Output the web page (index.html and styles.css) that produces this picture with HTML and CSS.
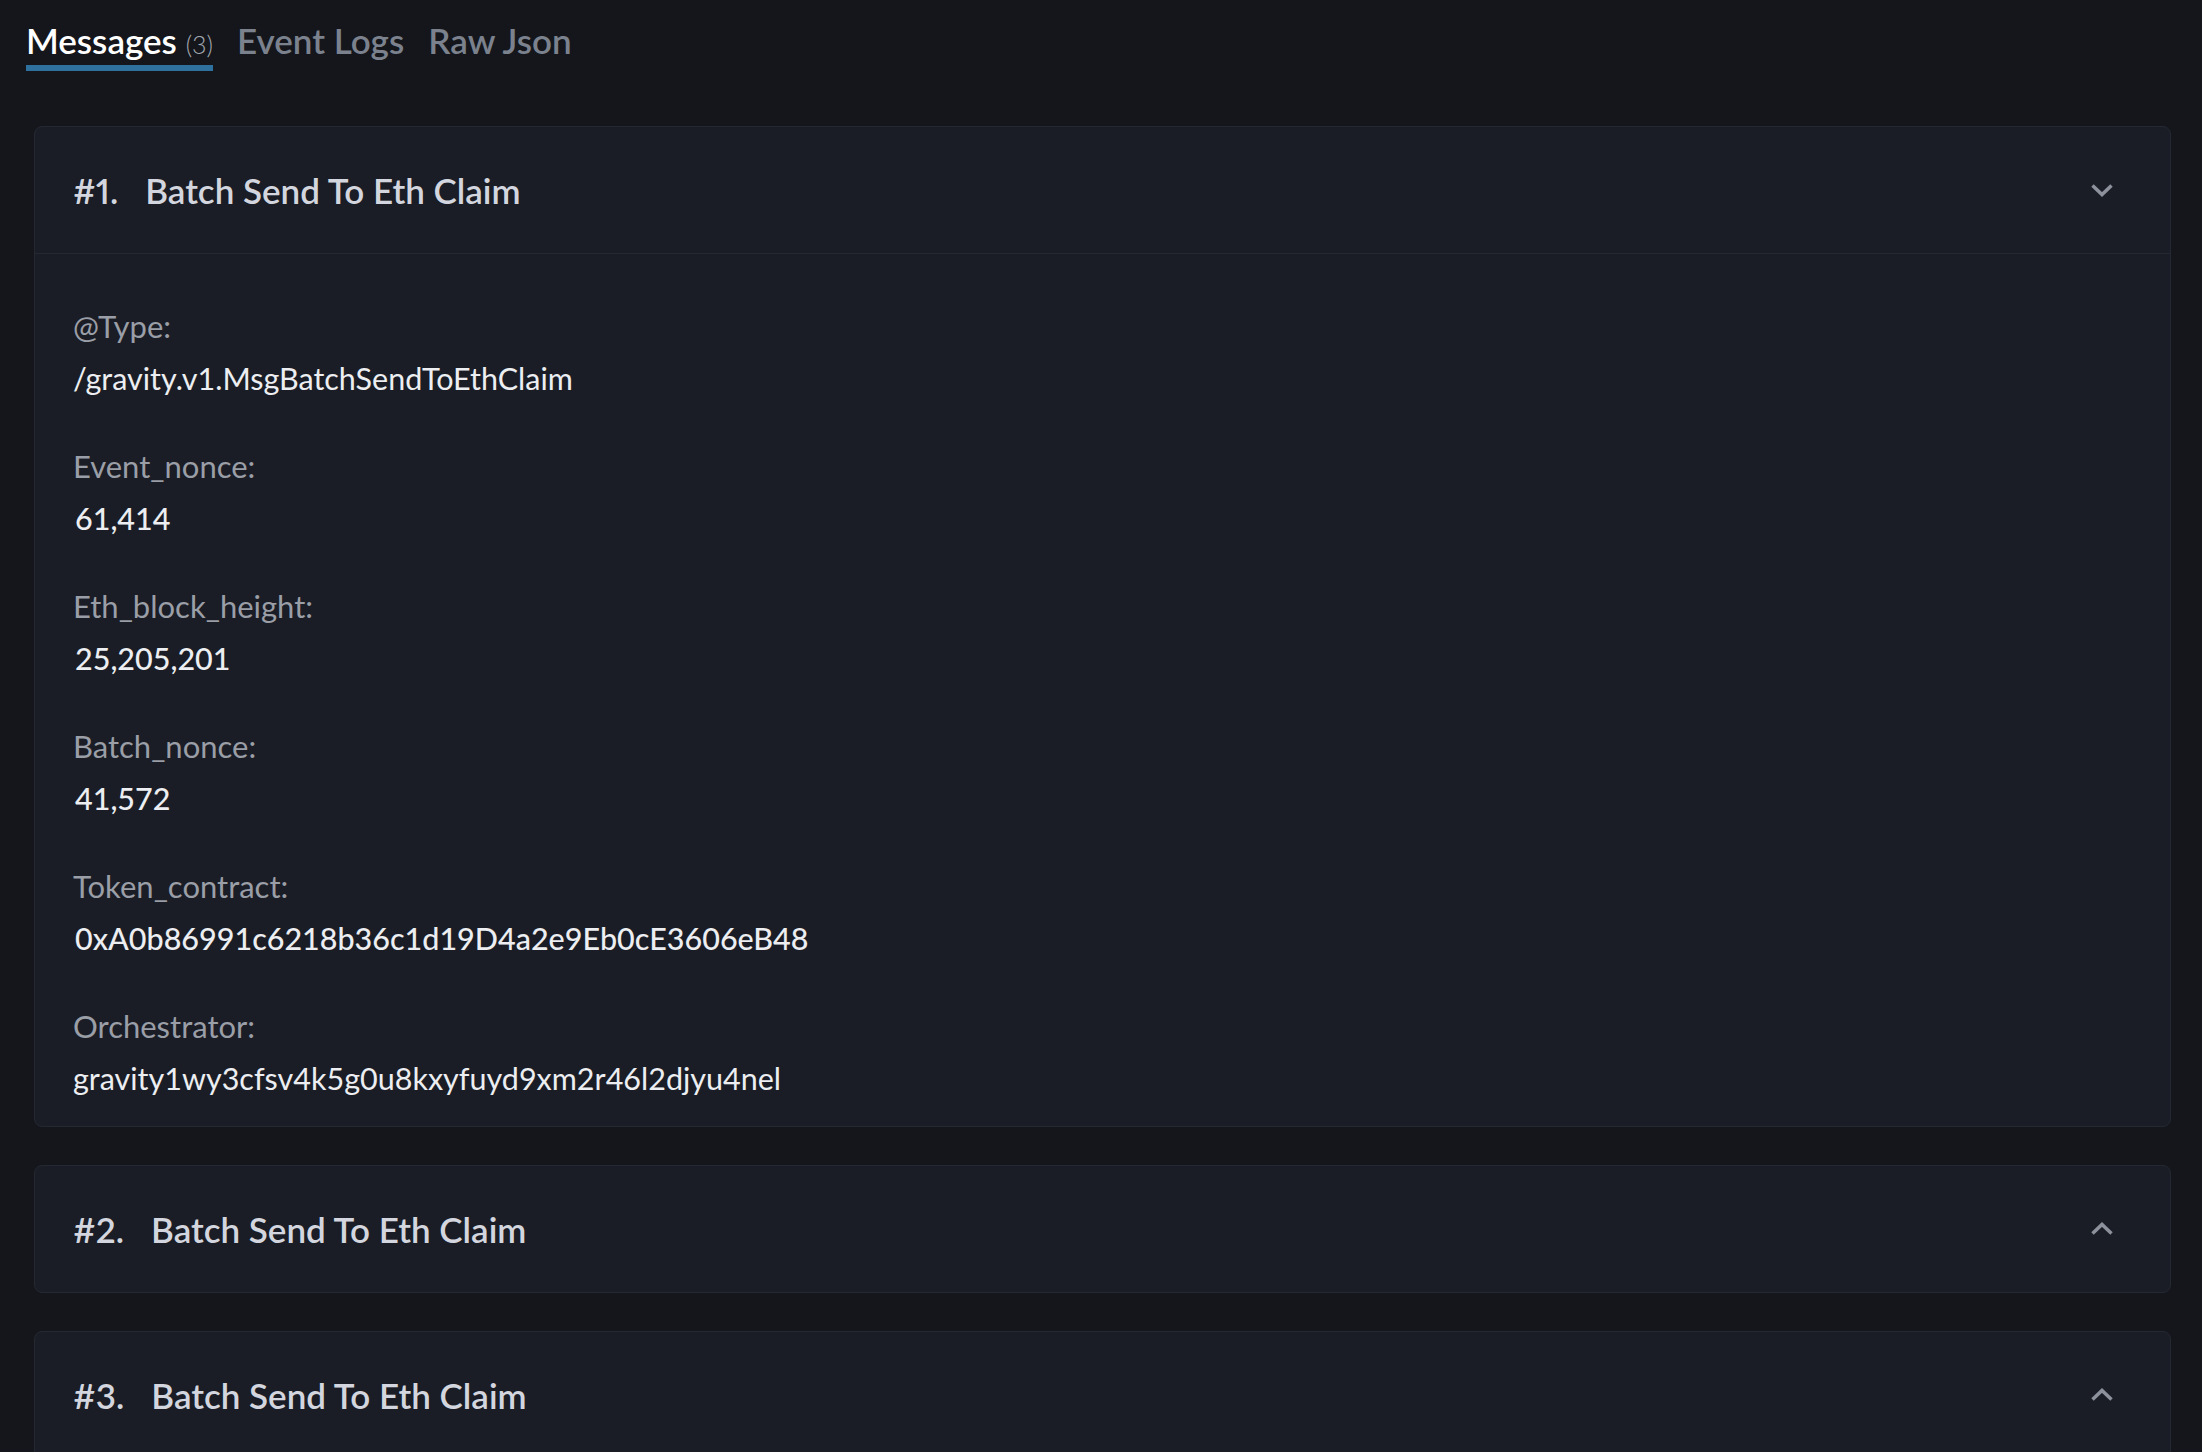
FILE: index.html
```html
<!DOCTYPE html>
<html lang="en">
<head>
    <meta charset="UTF-8">
    <meta name="viewport" content="width=device-width, initial-scale=1.0">
    <title>Transaction Messages</title>
    <link rel="stylesheet" href="styles.css">
</head>
<body>

    <div class="tabs">
        <div class="tab active">Messages <span class="count">(3)</span></div>
        <div class="tab">Event Logs</div>
        <div class="tab">Raw Json</div>
    </div>

    <div class="messages">
        <div class="msg">
            <div class="msg-head">
                <span class="msg-no">#1.</span>
                <span class="msg-title">Batch Send To Eth Claim</span>
                <svg class="chevron" viewBox="0 0 24 16" width="24" height="16"><polyline points="2.5,3.5 12,12.5 21.5,3.5"/></svg>
            </div>
            <div class="msg-body">
                <div class="field">
                    <div class="label">@Type:</div>
                    <div class="value">/gravity.v1.MsgBatchSendToEthClaim</div>
                </div>
                <div class="field">
                    <div class="label">Event_nonce:</div>
                    <div class="value num">61,414</div>
                </div>
                <div class="field">
                    <div class="label">Eth_block_height:</div>
                    <div class="value num">25,205,201</div>
                </div>
                <div class="field">
                    <div class="label">Batch_nonce:</div>
                    <div class="value num">41,572</div>
                </div>
                <div class="field">
                    <div class="label">Token_contract:</div>
                    <div class="value num">0xA0b86991c6218b36c1d19D4a2e9Eb0cE3606eB48</div>
                </div>
                <div class="field">
                    <div class="label">Orchestrator:</div>
                    <div class="value">gravity1wy3cfsv4k5g0u8kxyfuyd9xm2r46l2djyu4nel</div>
                </div>
            </div>
        </div>

        <div class="msg">
            <div class="msg-head">
                <span class="msg-no">#2.</span>
                <span class="msg-title">Batch Send To Eth Claim</span>
                <svg class="chevron" viewBox="0 0 24 16" width="24" height="16"><polyline points="2.5,12.5 12,3.5 21.5,12.5"/></svg>
            </div>
        </div>

        <div class="msg">
            <div class="msg-head">
                <span class="msg-no">#3.</span>
                <span class="msg-title">Batch Send To Eth Claim</span>
                <svg class="chevron" viewBox="0 0 24 16" width="24" height="16"><polyline points="2.5,12.5 12,3.5 21.5,12.5"/></svg>
            </div>
        </div>
    </div>

</body>
</html>
```

FILE: styles.css
```css
* {
    margin: 0;
    padding: 0;
    box-sizing: border-box;
}

body {
    background-color: #14161b;
    color: #eceef1;
    font-family: Lato, "Liberation Sans", sans-serif;
}

/* Tabs */
.tabs {
    display: flex;
    gap: 24px;
    padding: 20px 0 0 26px;
}

.tab {
    font-size: 35px;
    line-height: 40px;
    font-weight: 600;
    color: #7b828e;
    padding-bottom: 5px;
    border-bottom: 6px solid transparent;
}

.tab.active {
    color: #ffffff;
    border-color: #2e719e;
}

.count {
    font-size: 25px;
    line-height: 1;
    font-weight: 300;
    color: #a3a7af;
}

/* Message cards */
.messages {
    display: flex;
    flex-direction: column;
    gap: 38px;
    padding: 55px 31px 0 34px;
}

.msg {
    background-color: #1a1d25;
    border: 1px solid #242832;
    border-radius: 8px;
}

.msg-head {
    display: flex;
    align-items: center;
    min-height: 126px;
    padding: 0 56px 0 38px;
    font-size: 35px;
    line-height: 40px;
    font-weight: 600;
    color: #d3d6de;
}

.msg-no {
    margin-right: 27px;
    font-variant-numeric: proportional-nums;
}

.chevron {
    margin-left: auto;
    fill: none;
    stroke: #8c919b;
    stroke-width: 3.5;
}

.msg-body {
    display: flex;
    flex-direction: column;
    gap: 52px;
    padding: 54px 38px 30px;
    border-top: 1px solid #242832;
}

.label {
    font-size: 31px;
    line-height: 36px;
    color: #9a9ea7;
}

.value {
    margin-top: 16px;
    font-size: 30.5px;
    line-height: 36px;
    color: #eceef1;
}

.value.num {
    font-weight: 500;
    padding-left: 2px;
}
```
